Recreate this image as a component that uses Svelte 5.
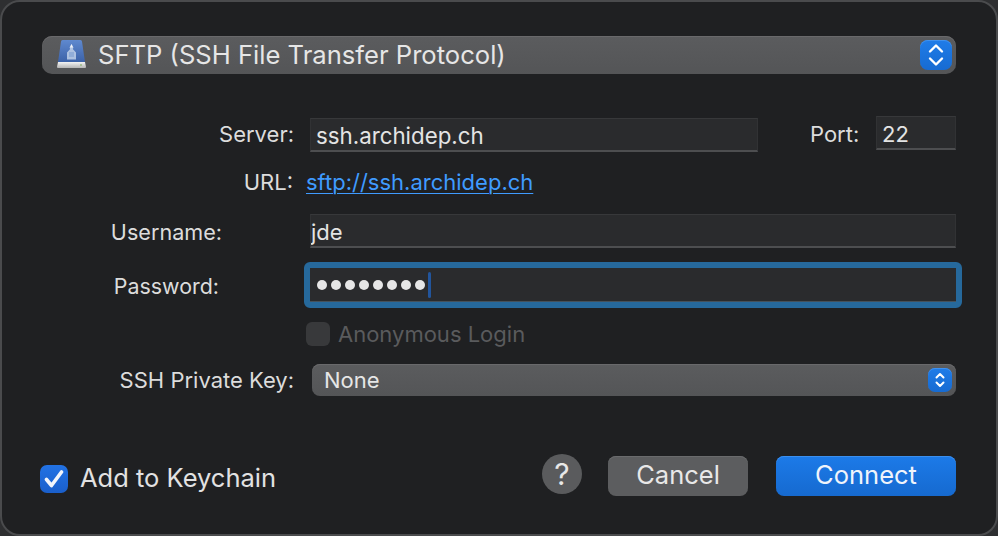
<div class="window">
  <div class="popup main">
    <svg class="disk" width="30" height="32" viewBox="0 0 30 32" aria-hidden="true">
      <defs>
        <linearGradient id="dk" x1="0" y1="0" x2="0" y2="1"><stop offset="0" stop-color="#5f89cf"/><stop offset="1" stop-color="#3c62a8"/></linearGradient>
        <linearGradient id="bs" x1="0" y1="0" x2="0" y2="1"><stop offset="0" stop-color="#f4f4f4"/><stop offset="1" stop-color="#b5b5b5"/></linearGradient>
      </defs>
      <path d="M5 2.500Q5.100 1 6.500 1H24.500Q25.900 1 26 2.500L29 23H2Z" fill="url(#dk)"/>
      <path d="M15.500 5 17.500 8.500 16.800 10 20 13.500 20 20.500H11V13.500L14.200 10 13.500 8.500Z" fill="#b9cbe6" opacity=".9"/>
      <path d="M15.500 5 17 8.500H14Z" fill="#eef2fa"/>
      <rect x="13" y="13" width="5" height="5" fill="#8aa8d6" opacity=".8"/>
      <path d="M2 23H29L30 28Q30 29 29 29H2Q1 29 1 28Z" fill="url(#bs)"/>
      <rect x="24" y="25.500" width="2" height="1" fill="#7fae5c"/>
    </svg>
    <span class="main-text">SFTP (SSH File Transfer Protocol)</span>
    <span class="stepper big">
      <svg width="16" height="24" viewBox="0 0 16 24" aria-hidden="true"><path d="M2 8.500 8 2.500 14 8.500M2 15.500 8 21.500 14 15.500" fill="none" stroke="#fff" stroke-width="2.400" stroke-linecap="round" stroke-linejoin="round"/></svg>
    </span>
  </div>

  <div class="row server-row">
    <label class="lbl l-server" for="srv">Server:</label>
    <input id="srv" class="field server" value="ssh.archidep.ch" />
    <label class="lbl l-port" for="prt">Port:</label>
    <input id="prt" class="field port" value="22" />
  </div>

  <div class="row url-row">
    <span class="lbl l-url">URL:</span>
    <span class="link">sftp://ssh.archidep.ch</span>
  </div>

  <div class="row user-row">
    <label class="lbl l-user" for="usr">Username:</label>
    <input id="usr" class="field wide" value="jde" />
  </div>

  <div class="row pass-row">
    <span class="lbl l-pass">Password:</span>
    <div class="ring">
      <div class="pw">
        {#each Array(8) as _}<i class="dot"></i>{/each}<i class="caret"></i>
      </div>
    </div>
  </div>

  <div class="row anon-row">
    <span class="anon-box"></span>
    <span class="anon-text">Anonymous Login</span>
  </div>

  <div class="row key-row">
    <span class="lbl l-key">SSH Private Key:</span>
    <div class="popup small">
      <span>None</span>
      <span class="stepper tiny">
        <svg width="12" height="18" viewBox="0 0 12 18" aria-hidden="true"><path d="M2.500 6.500 6 3 9.500 6.500M2.500 11.500 6 15 9.500 11.500" fill="none" stroke="#fff" stroke-width="2" stroke-linecap="round" stroke-linejoin="round"/></svg>
      </span>
    </div>
  </div>

  <div class="footer">
    <span class="check">
      <svg width="20" height="20" viewBox="0 0 20 20" aria-hidden="true"><path d="M2.500 10.500 7.500 16.500 17.500 3" fill="none" stroke="#f2f5fb" stroke-width="3.600" stroke-linecap="round" stroke-linejoin="round"/></svg>
    </span>
    <span class="keychain">Add to Keychain</span>
    <button class="help">?</button>
    <button class="btn cancel">Cancel</button>
    <button class="btn connect">Connect</button>
  </div>
</div>

<style>
  :global(body) { margin: 0; background: #2e2f31; }
  .window {
    box-sizing: border-box;
    width: 998px;
    height: 536px;
    padding: 34px 40px 0 40px;
    background: #1f2022;
    border: 2px solid #4a4b4d;
    border-radius: 20px;
    font-family: Inter, "Liberation Sans", sans-serif;
    font-size: 22px;
    color: #dfdfdf;
    overflow: hidden;
  }
  .row { display: flex; align-items: center; }
  .popup {
    box-sizing: border-box;
    display: flex;
    align-items: center;
    background: linear-gradient(#5b5c5e, #545557);
    box-shadow: inset 0 1px 0 #69696b;
    color: #e6e6e6;
  }
  .main { height: 38px; border-radius: 10px; padding: 0 4px 0 14px; }
  .disk { flex: none; }
  .main-text { margin-left: 12px; font-size: 25.600px; flex: 1; margin-top: -2px; }
  .stepper {
    display: flex;
    align-items: center;
    justify-content: center;
    background: linear-gradient(#1f7ce8, #176bd2);
    box-shadow: inset 0 1px 0 #3f91ef;
  }
  .big { width: 32px; height: 30px; border-radius: 8px; }
  .tiny { width: 24px; height: 24px; border-radius: 7px; }
  .lbl { text-align: right; flex: none; color: #dcdcdc; }
  .field {
    box-sizing: border-box;
    display: block;
    margin: 0;
    padding: 2px 0 0 5px;
    border: 0;
    border-radius: 0;
    outline: 0;
    border-top: 1px solid #37383a;
    border-left: 1px solid #313234;
    border-right: 1px solid #313234;
    border-bottom: 2px solid #4d4e50;
    background: #2a2b2d;
    color: #e4e4e4;
    font: inherit;
    height: 34px;
  }
  .server-row { margin-top: 42px; height: 36px; }
  .l-server { width: 252px; }
  .server { width: 448px; margin-left: 16px; margin-top: 2px; font-size: 22.300px; }
  .l-port { margin-left: 52px; width: 49px; }
  .port { width: 80px; margin-left: 17px; margin-top: -2px; }
  .url-row { margin-top: 14px; height: 30px; padding-top: 2px; box-sizing: border-box; }
  .l-url { width: 251px; }
  .link { margin-left: 13px; color: #3f9bff; text-decoration: underline; text-underline-offset: 3px; text-decoration-thickness: 1px; }
  .user-row { margin-top: 18px; height: 34px; }
  .l-user { width: 180px; font-size: 21.600px; padding-top: 2px; }
  .wide { width: 646px; margin-left: 88px; padding-left: 0; }
  .pass-row { margin-top: 14px; height: 46px; }
  .l-pass { width: 177px; font-size: 21.400px; padding-top: 2px; }
  .ring {
    box-sizing: border-box;
    flex: none;
    width: 658px;
    height: 46px;
    margin-left: 85px;
    border: 6px solid #26699c;
    border-radius: 6px;
  }
  .pw {
    box-sizing: border-box;
    height: 100%;
    display: flex;
    align-items: center;
    gap: 4px;
    padding-left: 7px;
    background: #2a2b2d;
    border-bottom: 1px solid #45525c;
  }
  .dot { width: 10px; height: 10px; border-radius: 50%; background: #e6e6e6; flex: none; }
  .caret { width: 3px; height: 26px; margin-left: -1px; background: #22559c; border-radius: 2px; flex: none; }
  .anon-row { margin-top: 14px; height: 24px; }
  .anon-box {
    box-sizing: border-box;
    width: 24px; height: 24px;
    margin-left: 264px;
    background: #38393b;
    border-radius: 6px;
  }
  .anon-text { margin-left: 8px; color: #5a5b5d; }
  .key-row { margin-top: 18px; height: 32px; }
  .l-key { width: 252px; }
  .small { width: 644px; height: 32px; margin-left: 18px; border-radius: 8px; padding: 0 4px 0 12px; justify-content: space-between; }
  .footer { display: flex; align-items: center; margin-top: 60px; height: 40px; margin-left: -2px; }
  .check {
    display: flex; align-items: center; justify-content: center;
    width: 28px; height: 28px; margin-top: 6px;
    border-radius: 7px;
    background: linear-gradient(#2272e4, #1a5fcb);
    flex: none;
  }
  .keychain { margin-left: 12px; margin-top: 2px; font-size: 25.500px; width: 462px; flex: none; color: #e2e2e2; }
  button { font-family: inherit; border: 0; padding: 0; color: #e8e8e8; }
  .help {
    width: 40px; height: 40px; border-radius: 50%;
    margin-top: -4px;
    background: #5a5b5d;
    font-size: 30px;
    flex: none;
  }
  .btn { height: 40px; font-size: 25.500px; border-radius: 8px; flex: none; padding-bottom: 4px; }
  .cancel { width: 140px; margin-left: 26px; background: #5c5d5f; box-shadow: inset 0 1px 0 #6a6b6d; }
  .connect { width: 180px; margin-left: 28px; background: linear-gradient(#1c7ae8, #166ad0); box-shadow: inset 0 1px 0 #3b8fee; color: #f0f4fb; }
</style>
